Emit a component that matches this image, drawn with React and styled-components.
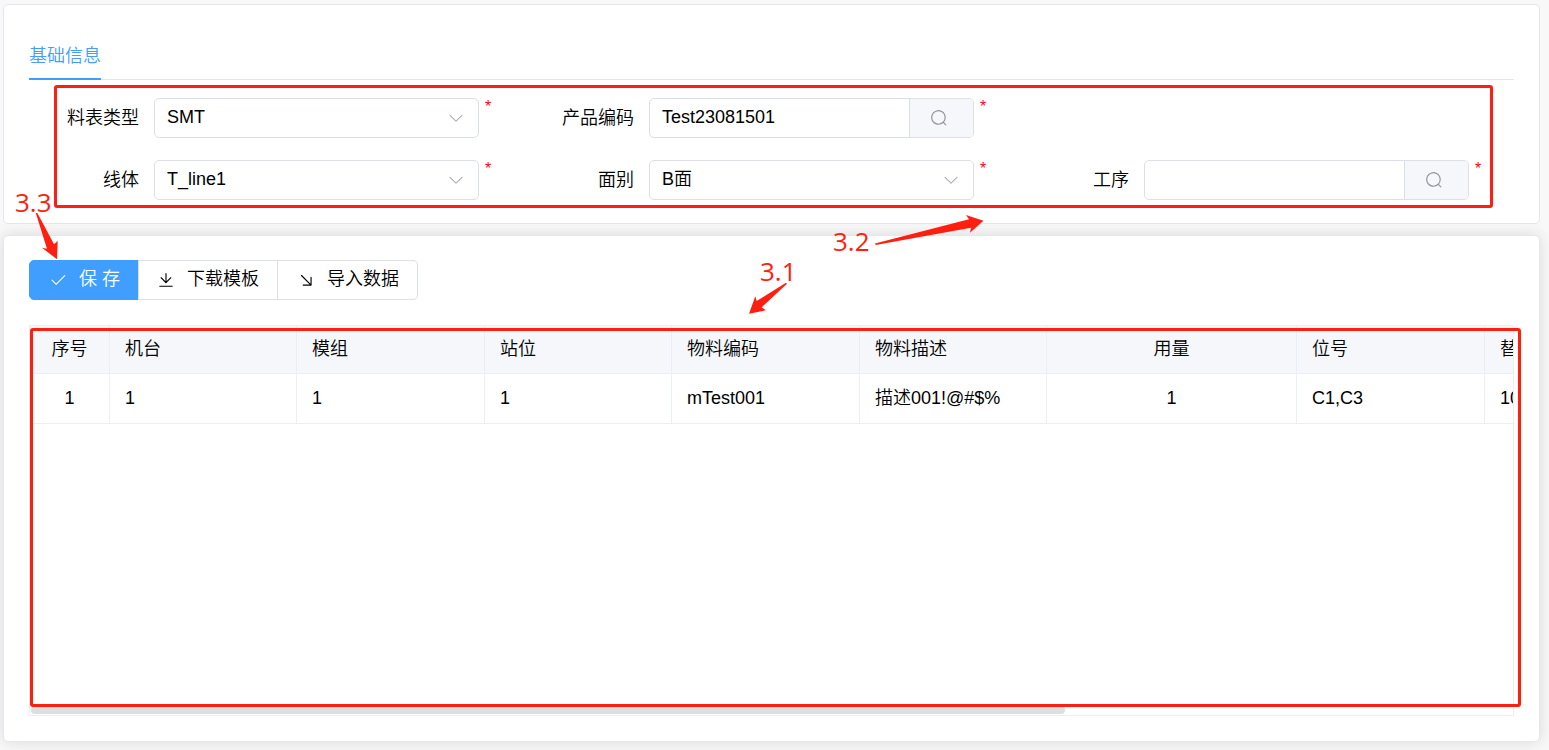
import React from "react";
import styled, { createGlobalStyle } from "styled-components";

const theme = {
  primary: "#409eff",
  border: "#dcdfe6",
  lightBorder: "#e4e7ed",
  cellBorder: "#ebeef5",
  fill: "#f5f7fa",
  text: "#000",
  muted: "#a8abb2",
  mark: "#ff1f10",
};

const GlobalStyle = createGlobalStyle`
  * {
    box-sizing: border-box;
  }
  body {
    margin: 0;
    background: #f8f8f8;
    color: ${theme.text};
    font-family: "Liberation Sans", "Noto Sans CJK SC", sans-serif;
    font-size: 18px;
    font-weight: 350;
    line-height: 24px;
  }
  button, input, select {
    font: inherit;
    color: inherit;
  }
`;

const Page = styled.main`
  position: relative;
  display: flex;
  flex-direction: column;
  gap: 11px;
  min-height: 100vh;
  padding: 4px 9px 8px 3px;
`;

const Card = styled.section`
  display: flex;
  flex-direction: column;
  flex-grow: ${props => (props.$grow ? 1 : 0)};
  padding: ${props => (props.$grow ? "24px 25px 25px" : "24px 25px 23px")};
  background: #fff;
  border: 1px solid ${theme.lightBorder};
  border-radius: 5px;
  box-shadow: ${props => (props.$raised ? "0 0 15px rgba(0, 0, 0, 0.12)" : "none")};
`;

const Tabs = styled.nav`
  display: flex;
  height: 51px;
  box-shadow: inset 0 -1px ${theme.lightBorder};
`;

const Tab = styled.a`
  display: flex;
  align-items: center;
  padding-top: 4px;
  color: ${theme.primary};
  text-decoration: none;
  border-bottom: 2px solid ${theme.primary};
`;

const Form = styled.form`
  position: relative;
  display: grid;
  grid-template-columns: repeat(3, 1fr);
  row-gap: 22px;
  margin-top: 18px;
`;

const Field = styled.div`
  display: flex;
  grid-column: ${props => props.$column};
`;

const Label = styled.label`
  width: 125px;
  padding-right: 15px;
  line-height: 40px;
  text-align: right;
`;

const Control = styled.div`
  position: relative;
  display: flex;
  flex: 1;
  min-width: 0;
  height: 40px;
  border: 1px solid ${theme.border};
  border-radius: 5px;
  overflow: hidden;
`;

const Select = styled.select`
  flex: 1;
  min-width: 0;
  padding: 0 40px 2px 12px;
  background: none;
  border: 0;
  outline: 0;
  appearance: none;
`;

const SelectArrow = styled.span`
  position: absolute;
  top: 10px;
  right: 13px;
  display: flex;
  color: ${theme.muted};
  pointer-events: none;
`;

const Input = styled.input`
  flex: 1;
  min-width: 0;
  padding: 0 12px 2px;
  background: none;
  border: 0;
  outline: 0;
`;

const SearchButton = styled.button`
  display: flex;
  align-items: center;
  width: 64px;
  padding: 0 20px;
  background: ${theme.fill};
  color: #909399;
  border: 0;
  border-left: 1px solid ${theme.border};
`;

const Required = styled.span`
  width: 45px;
  padding-left: 6px;
  color: #ff0020;
  font-size: 16px;
  line-height: 18px;
`;

const ButtonGroup = styled.div`
  display: flex;
  margin-bottom: 25px;
`;

const Button = styled.button`
  display: flex;
  align-items: center;
  gap: 12px;
  height: 40px;
  padding: 0 18px;
  background: ${props => (props.$primary ? theme.primary : "#fff")};
  color: ${props => (props.$primary ? "#fff" : theme.text)};
  border: 1px solid ${props => (props.$primary ? theme.primary : theme.border)};
  white-space: nowrap;
  & + & {
    margin-left: -1px;
  }
  &:first-child {
    padding-left: 19px;
    border-radius: 5px 0 0 5px;
  }
  &:last-child {
    padding-left: 19px;
    border-radius: 0 5px 5px 0;
  }
`;

const ButtonText = styled.span`
  padding-bottom: 2px;
`;

const TableArea = styled.div`
  position: relative;
  display: flex;
  flex: 1;
  min-height: 240px;
`;

const TableScroll = styled.div`
  display: flex;
  flex: 1;
  flex-direction: column;
  justify-content: space-between;
  min-width: 0;
  border: 1px solid ${theme.cellBorder};
  overflow: hidden;
`;

const Table = styled.table`
  width: 2124px;
  table-layout: fixed;
  border-collapse: separate;
  border-spacing: 0;
`;

const Cell = styled.td`
  height: 50px;
  padding: 0 15px 2px;
  border-right: 1px solid ${theme.cellBorder};
  border-bottom: 1px solid ${theme.cellBorder};
  text-align: ${props => (props.$center ? "center" : "left")};
`;

const HeadCell = styled(Cell)`
  height: 48px;
  background: ${theme.fill};
  font-weight: 350;
`;

const ScrollThumb = styled.div`
  width: 1034px;
  height: 8px;
  margin: 0 1px 1px;
  background: #dddee0;
  border-radius: 4px;
`;

const FormFrame = styled.div`
  position: absolute;
  inset: -13px 21px -8px 25px;
  border: 3px solid ${theme.mark};
  border-radius: 3px;
  pointer-events: none;
`;

const TableFrame = styled(FormFrame)`
  inset: 3px -7px 9px 1px;
`;

const Arrows = styled.svg`
  position: absolute;
  top: 0;
  left: 0;
  fill: ${theme.mark};
  pointer-events: none;
`;

const Mark = styled.span`
  position: absolute;
  top: ${props => props.$top}px;
  left: ${props => props.$left}px;
  color: ${theme.mark};
  font-family: "Open Sans", sans-serif;
  font-size: 26px;
  font-weight: 400;
  line-height: 30px;
`;

const icons = {
  down:
    "M831.872 340.864 512 652.672 192.128 340.864a30.592 30.592 0 0 0-42.752 0 29.12 29.12 0 0 0 0 41.6L489.664 714.24a32 32 0 0 0 44.672 0l340.288-331.712a29.12 29.12 0 0 0 0-41.728 30.592 30.592 0 0 0-42.752 0z",
  search:
    "m795.904 750.72 124.992 124.928a32 32 0 0 1-45.248 45.248L750.656 795.904a416 416 0 1 1 45.248-45.248zM480 832a352 352 0 1 0 0-704 352 352 0 0 0 0 704z",
  check:
    "M406.656 706.944 195.84 496.256a32 32 0 1 0-45.248 45.248l256 256 512-512a32 32 0 0 0-45.248-45.248L406.592 706.944z",
  download:
    "M160 832h704a32 32 0 1 1 0 64H160a32 32 0 1 1 0-64zm384-253.696 236.288-236.352 45.248 45.248L508.8 704 192 387.2l45.248-45.248L480 584.704V128h64v450.304z",
  bottomRight:
    "M352 768a32 32 0 1 0 0 64h448a32 32 0 0 0 32-32V352a32 32 0 0 0-64 0v416H352zM777.344 822.656a32 32 0 0 0 45.312-45.312l-544-544a32 32 0 0 0-45.312 45.312l544 544z",
};

const Icon = ({ name }) => (
  <svg width="18" height="18" viewBox="0 0 1024 1024" fill="currentColor" aria-hidden="true">
    <path d={icons[name]} />
  </svg>
);

const SelectField = ({ id, label, value, column }) => (
  <Field $column={column}>
    <Label htmlFor={id}>{label}</Label>
    <Control>
      <Select id={id} defaultValue={value}>
        <option>{value}</option>
      </Select>
      <SelectArrow>
        <Icon name="down" />
      </SelectArrow>
    </Control>
    <Required>*</Required>
  </Field>
);

const SearchField = ({ id, label, value, column }) => (
  <Field $column={column}>
    <Label id={`${id}-label`} htmlFor={id}>
      {label}
    </Label>
    <Control>
      <Input id={id} type="text" defaultValue={value} />
      <SearchButton type="button" aria-labelledby={`${id}-label`}>
        <Icon name="search" />
      </SearchButton>
    </Control>
    <Required>*</Required>
  </Field>
);

const columns = [
  { title: "序号", value: "1", width: 80, center: true },
  { title: "机台", value: "1", width: 187 },
  { title: "模组", value: "1", width: 188 },
  { title: "站位", value: "1", width: 187 },
  { title: "物料编码", value: "mTest001", width: 188 },
  { title: "物料描述", value: "描述001!@#$%", width: 187 },
  { title: "用量", value: "1", width: 250, center: true },
  { title: "位号", value: "C1,C3", width: 188 },
  { title: "替", value: "10" },
];

const MaterialTable = () => (
  <Table>
    <colgroup>
      {columns.map(column => (
        <col key={column.title} width={column.width} />
      ))}
    </colgroup>
    <thead>
      <tr>
        {columns.map(column => (
          <HeadCell as="th" key={column.title} $center={column.center}>
            {column.title}
          </HeadCell>
        ))}
      </tr>
    </thead>
    <tbody>
      <tr>
        {columns.map(column => (
          <Cell key={column.title} $center={column.center}>
            {column.value}
          </Cell>
        ))}
      </tr>
    </tbody>
  </Table>
);

const Annotations = () => (
  <>
    <Arrows width="1000" height="330" aria-hidden="true">
      <path d="M35.7 212.7 37.5 213.3 54 244.3 57.7 241 57 259.3 42 247.7 47 248.7Z" />
      <path d="M875 243.5 969 219.3 966 215 983.5 220.7 970 232.7 971 227.7 875.7 245Z" />
      <path d="M786 282.7 787 283.7 761.7 307.3 766 310.3 749 313.7 755.3 296.3 756.7 301Z" />
    </Arrows>
    <Mark $top={187} $left={15}>3.3</Mark>
    <Mark $top={226} $left={833}>3.2</Mark>
    <Mark $top={256} $left={760}>3.1</Mark>
  </>
);

class App extends React.Component {
  render() {
    return (
      <Page>
        <GlobalStyle />
        <Card>
          <Tabs>
            <Tab href="#basic">基础信息</Tab>
          </Tabs>
          <Form id="basic">
            <SelectField id="type" label="料表类型" value="SMT" column={1} />
            <SearchField id="product" label="产品编码" value="Test23081501" column={2} />
            <SelectField id="line" label="线体" value="T_line1" column={1} />
            <SelectField id="side" label="面别" value="B面" column={2} />
            <SearchField id="process" label="工序" value="" column={3} />
            <FormFrame />
          </Form>
        </Card>
        <Card $grow $raised>
          <ButtonGroup>
            <Button type="button" $primary>
              <Icon name="check" />
              <ButtonText>保 存</ButtonText>
            </Button>
            <Button type="button">
              <Icon name="download" />
              <ButtonText>下载模板</ButtonText>
            </Button>
            <Button type="button">
              <Icon name="bottomRight" />
              <ButtonText>导入数据</ButtonText>
            </Button>
          </ButtonGroup>
          <TableArea>
            <TableScroll>
              <MaterialTable />
              <ScrollThumb />
            </TableScroll>
            <TableFrame />
          </TableArea>
        </Card>
        <Annotations />
      </Page>
    );
  }
}

export default App;
